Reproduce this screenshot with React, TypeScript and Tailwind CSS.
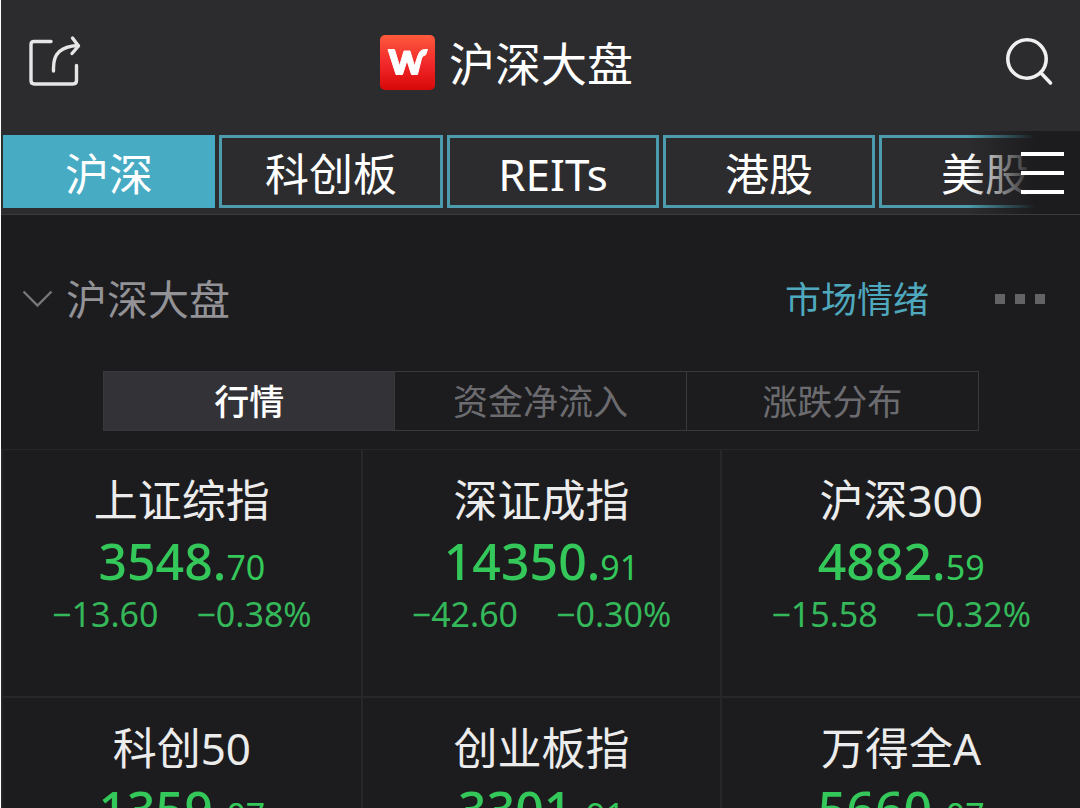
import React from "react";

type Quote = {
  name: string;
  whole: string;
  decimal: string;
  change: string;
  percent: string;
};

const markets = ["沪深", "科创板", "REITs", "港股", "美股"];
const views = ["行情", "资金净流入", "涨跌分布"];
const quotes: Quote[] = [
  { name: "上证综指", whole: "3548.", decimal: "70", change: "−13.60", percent: "−0.38%" },
  { name: "深证成指", whole: "14350.", decimal: "91", change: "−42.60", percent: "−0.30%" },
  { name: "沪深300", whole: "4882.", decimal: "59", change: "−15.58", percent: "−0.32%" },
  { name: "科创50", whole: "1359.", decimal: "07", change: "", percent: "" },
  { name: "创业板指", whole: "3301.", decimal: "91", change: "", percent: "" },
  { name: "万得全A", whole: "5660.", decimal: "07", change: "", percent: "" },
];

function ShareIcon() {
  return (
    <svg className="h-[56px] w-[56px]" viewBox="0 0 56 56" fill="none" stroke="#e6e6e6" strokeWidth="3.4" strokeLinecap="round" strokeLinejoin="round" aria-hidden="true">
      <path d="M25 7.500H8q-3 0-3 3V46.500q0 3.500 3.500 3.500h38.500q3.500 0 3.500-3.500V31.500" />
      <path d="M27.500 37V34C27.500 19 35 12.500 52 11.500" />
      <path d="M46.500 4l6 8-6.500 7.500" />
    </svg>
  );
}

function SearchIcon() {
  return (
    <svg className="h-[52px] w-[52px]" viewBox="0 0 52 52" fill="none" stroke="#f0f0f0" strokeWidth="3.6" strokeLinecap="round" aria-hidden="true">
      <circle cx="24" cy="23" r="19.200" />
      <path d="M37.500 36.500L47.500 47" />
    </svg>
  );
}

function Logo() {
  return (
    <svg className="h-[55px] w-[55px]" viewBox="0 0 55 55" fill="none" aria-hidden="true">
      <defs>
        <linearGradient id="logo-fill" x1="0" y1="0" x2="0" y2="1">
          <stop offset="0" stopColor="#fd5a3c" />
          <stop offset="0.5" stopColor="#f22a2c" />
          <stop offset="1" stopColor="#d90808" />
        </linearGradient>
      </defs>
      <rect width="55" height="55" rx="5" fill="url(#logo-fill)" />
      <path d="M8 14.500h6.500l5 16.500 4.500-15h6l4.500 15 3.500-10.500q2-6 6.500-6h3l-2 5.500q-3 0-4 3.500L37.500 39.500h-6L27 25.500l-4.500 14h-6.500z" fill="#fff" stroke="#fff" strokeWidth="1" strokeLinejoin="round" />
    </svg>
  );
}

function QuoteCell({ quote }: { quote: Quote }) {
  return (
    <a href="#quote" className="flex h-[248px] flex-col items-center border-b-2 border-l-2 border-[#27272a] pt-[20px]">
      <h3 className="text-[44px] leading-[60px] text-[#ececec]">{quote.name}</h3>
      <p className="flex items-baseline text-[#34c759]">
        <span className="text-[50px] leading-[62px] font-medium">{quote.whole}</span>
        <span className="text-[34px] leading-[40px]">{quote.decimal}</span>
      </p>
      <p className="flex gap-[38px] text-[34px] leading-[44px] text-[#34b85a]">
        <span>{quote.change}</span>
        <span>{quote.percent}</span>
      </p>
    </a>
  );
}

export default function App() {
  return (
    <div className="h-screen overflow-hidden border-l border-white bg-[#1c1c1e] font-['Noto_Sans','Noto_Sans_CJK_SC',sans-serif]">
      <header className="border-b border-[#3c3a39] bg-[#2c2c2e]">
        <div className="grid h-[131px] grid-cols-[1fr_auto_1fr] items-center px-[25px] pb-[7px]">
          <button type="button" aria-label="分享" className="justify-self-start">
            <ShareIcon />
          </button>
          <div className="flex items-center gap-[14px] pr-[68px]">
            <Logo />
            <h1 className="pt-[2px] text-[46px] leading-[60px] text-white">沪深大盘</h1>
          </div>
          <button type="button" aria-label="搜索" className="justify-self-end">
            <SearchIcon />
          </button>
        </div>
        <div className="relative">
          <nav className="flex gap-1 overflow-hidden px-[2px] pt-1 pb-[6px]">
            {markets.map((market, index) => (
              <button
                key={market}
                type="button"
                className={
                  index === 0
                    ? "h-[73px] min-w-[212px] shrink-0 border-[3px] border-[#47abc4] bg-[#47abc4] px-[43px] pt-[4px] text-[44px] leading-[60px] text-white"
                    : "h-[73px] min-w-[212px] shrink-0 border-[3px] border-[#4c9cae] px-[43px] pt-[4px] text-[44px] leading-[60px] text-white"
                }
              >
                {market}
              </button>
            ))}
          </nav>
          <div className="absolute inset-y-0 right-0 flex w-[112px] items-center justify-end bg-linear-to-r from-transparent to-[#1c1c1e] to-60% pr-4">
            <button type="button" aria-label="全部市场" className="flex flex-col gap-[15px]">
              <span className="h-[4px] w-[43px] bg-white" />
              <span className="h-[4px] w-[43px] bg-white" />
              <span className="h-[4px] w-[43px] bg-white" />
            </button>
          </div>
        </div>
      </header>

      <main>
        <div className="flex items-center justify-between pt-[54px] pr-[35px] pl-[21px]">
          <button type="button" className="flex items-center gap-[13px] text-[41px] leading-[60px] text-[#929297]">
            <svg className="h-[18px] w-[31px]" viewBox="0 0 31 18" fill="none" stroke="#77777b" strokeWidth="2.4" aria-hidden="true">
              <path d="M1.500 1.500L15.500 15.500 29.500 1.500" />
            </svg>
            沪深大盘
          </button>
          <div className="flex items-center gap-[66px]">
            <a href="#sentiment" className="pt-[2px] text-[36px] leading-[58px] text-[#4fa9be]">市场情绪</a>
            <button type="button" aria-label="更多" className="flex gap-[10px]">
              <span className="size-[10px] bg-[#636366]" />
              <span className="size-[10px] bg-[#636366]" />
              <span className="size-[10px] bg-[#636366]" />
            </button>
          </div>
        </div>

        <div className="mr-[101px] ml-[102px] mt-[42px] grid h-[60px] grid-cols-3 divide-x divide-[#38383b] border border-[#38383b]">
          {views.map((view, index) => (
            <button
              key={view}
              type="button"
              className={
                index === 0
                  ? "bg-[#333337] pt-[2px] text-[35px] leading-[56px] font-medium text-white"
                  : "pt-[2px] text-[35px] leading-[56px] text-[#6c6c70]"
              }
            >
              {view}
            </button>
          ))}
        </div>

        <section className="mt-[18px] grid grid-cols-3 border-t border-[#27272a]">
          {quotes.map((quote) => (
            <QuoteCell key={quote.name} quote={quote} />
          ))}
        </section>
      </main>
    </div>
  );
}
